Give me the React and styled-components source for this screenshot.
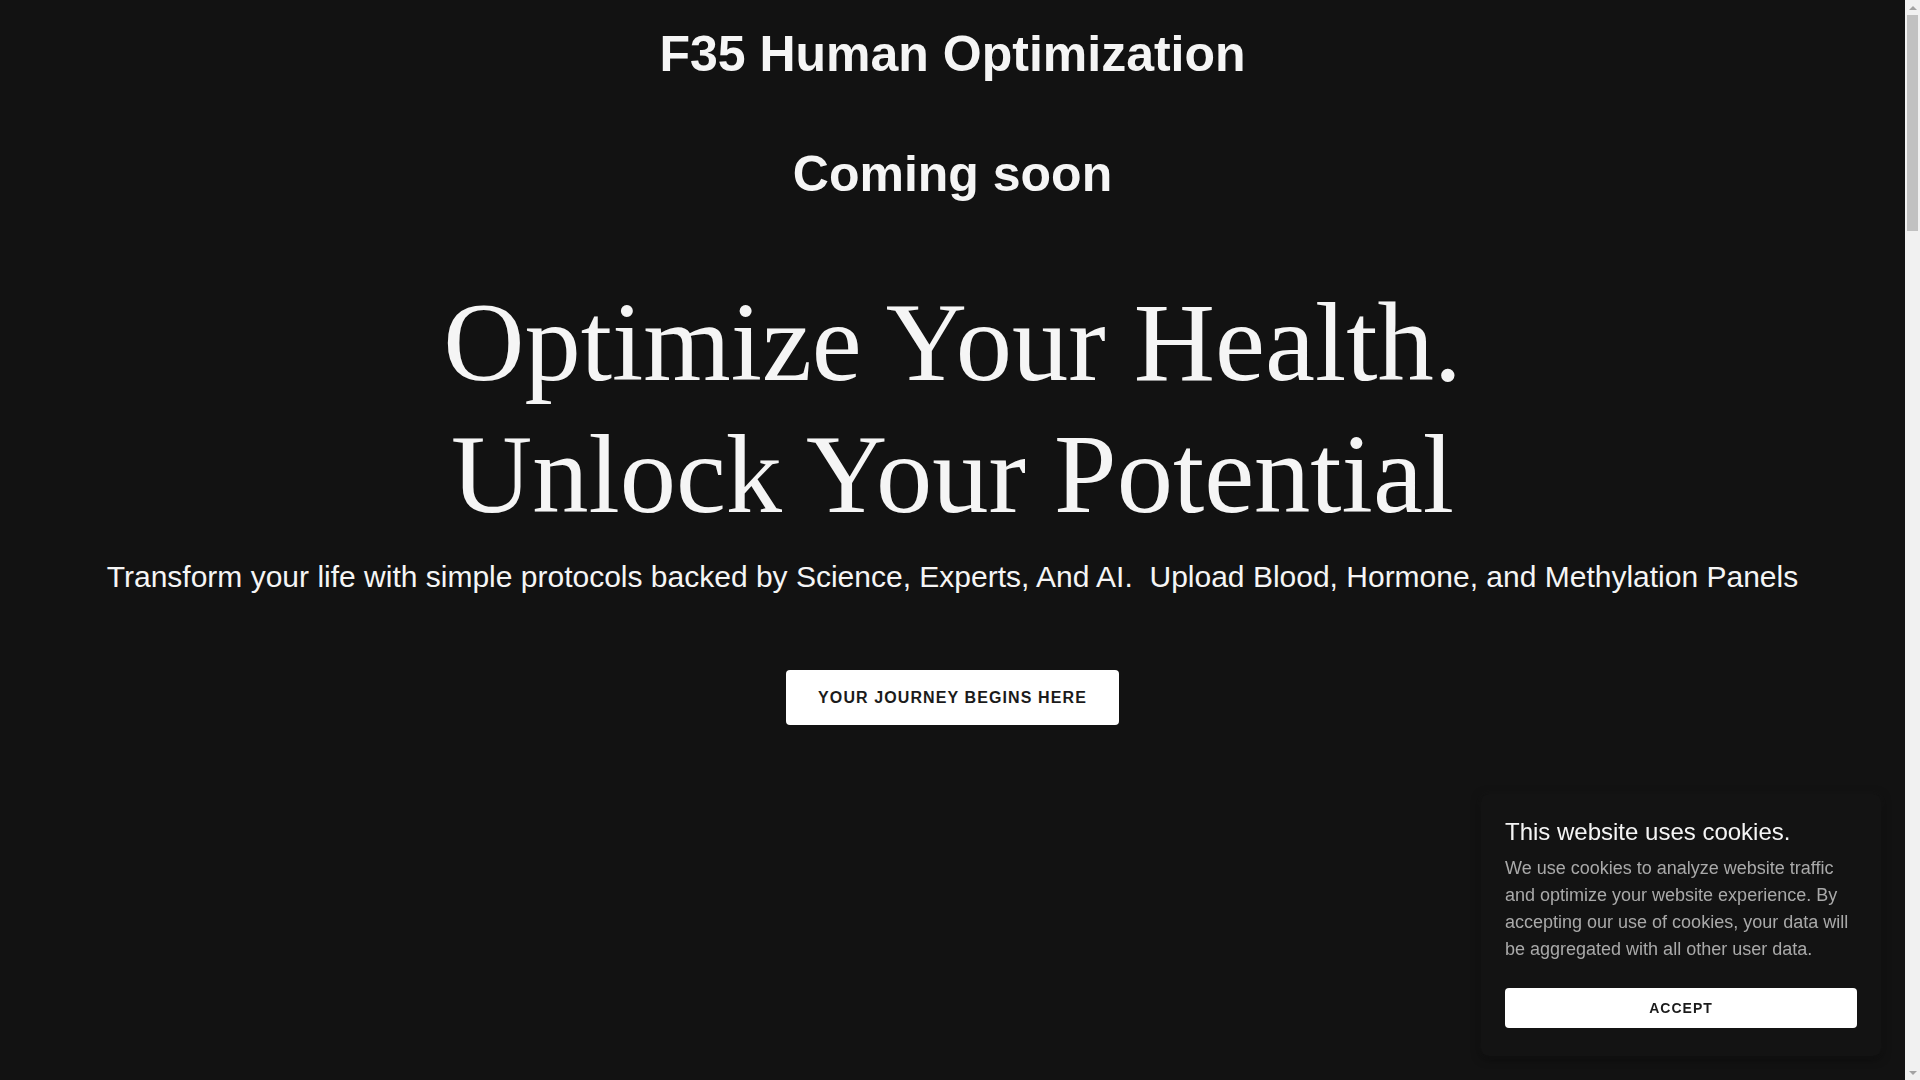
import React from "react";
import styled, { createGlobalStyle } from "styled-components";

const GlobalStyle = createGlobalStyle`
  html, body {
    margin: 0;
    padding: 0;
    background: #121212;
  }
  body {
    font-family: "Liberation Sans", Arial, sans-serif;
    color: #f5f5f5;
  }
  * { box-sizing: border-box; }
`;

const Page = styled.div`
  min-height: 5250px;
  margin-right: 15px;
  background: #121212;
  display: flex;
  flex-direction: column;
`;

const Header = styled.header`
  padding-top: 24px;
  display: flex;
  flex-direction: column;
  align-items: center;
`;

const SiteTitle = styled.h1`
  margin: 0;
  font-family: "Liberation Sans", Arial, sans-serif;
  font-weight: 700;
  font-size: 50px;
  line-height: 60px;
  color: #f5f5f5;
  text-align: center;
`;

const ComingSoon = styled.h2`
  margin: 60px 0 0;
  font-family: "Liberation Sans", Arial, sans-serif;
  font-weight: 700;
  font-size: 50px;
  line-height: 60px;
  color: #f5f5f5;
  text-align: center;
`;

const Hero = styled.section`
  display: flex;
  flex-direction: column;
  align-items: center;
  padding-top: 72px;
`;

const Headline = styled.h3`
  margin: 0;
  font-family: "Liberation Serif", "Times New Roman", serif;
  font-weight: 400;
  font-size: 112.5px;
  line-height: 132px;
  color: #f5f5f5;
  text-align: center;
`;

const HeadlineLine = styled.span`
  display: block;
`;

const Subtitle = styled.p`
  margin: 14px 0 0;
  font-family: "Liberation Sans", Arial, sans-serif;
  font-size: 30px;
  line-height: 45px;
  color: #f5f5f5;
  text-align: center;
  white-space: nowrap;
`;

const CtaButton = styled.a`
  margin-top: 71px;
  display: inline-flex;
  align-items: center;
  justify-content: center;
  height: 55px;
  padding: 0 32px;
  background: #ffffff;
  border-radius: 4px;
  font-family: "Liberation Sans", Arial, sans-serif;
  font-weight: 700;
  font-size: 16px;
  letter-spacing: 1.1px;
  color: #1b1b1b;
  text-decoration: none;
  cursor: pointer;
`;

const CookiePanel = styled.aside`
  position: fixed;
  right: 39px;
  bottom: 24px;
  width: 400px;
  padding: 24px 24px 28px;
  background: #131313;
  border-radius: 8px;
  box-shadow: 0 0 6px rgba(255, 255, 255, 0.04), 0 2px 10px rgba(0, 0, 0, 0.6);
  display: flex;
  flex-direction: column;
`;

const CookieTitle = styled.h4`
  margin: 0;
  font-family: "Liberation Sans", Arial, sans-serif;
  font-weight: 400;
  font-size: 24px;
  line-height: 28.8px;
  color: #f5f5f5;
`;

const CookieText = styled.p`
  margin: 8px 0 0;
  font-family: "Liberation Sans", Arial, sans-serif;
  font-size: 18px;
  line-height: 27px;
  color: #a9a9a9;
`;

const AcceptButton = styled.button`
  margin-top: 25px;
  height: 40px;
  width: 100%;
  border: none;
  border-radius: 4px;
  background: #ffffff;
  font-family: "Liberation Sans", Arial, sans-serif;
  font-weight: 700;
  font-size: 14px;
  letter-spacing: 1px;
  color: #1b1b1b;
  cursor: pointer;
`;

/* Browser scrollbar drawn as an overlay on the right edge */
const ScrollTrack = styled.div`
  position: fixed;
  top: 0;
  right: 0;
  width: 15px;
  height: 100vh;
  background: #f1f1f1;
  display: flex;
  flex-direction: column;
  align-items: center;
`;

const ScrollArrow = styled.div`
  flex: 0 0 15px;
  width: 15px;
  display: flex;
  align-items: center;
  justify-content: center;
  &::before {
    content: "";
    width: 0;
    height: 0;
    border-left: 4px solid transparent;
    border-right: 4px solid transparent;
    ${(p) =>
      p.$down
        ? "border-top: 4px solid #a3a3a3;"
        : "border-bottom: 4px solid #a3a3a3;"}
  }
`;

const ScrollBody = styled.div`
  flex: 1;
  width: 100%;
  padding: 0 2px;
`;

const ScrollThumb = styled.div`
  height: 216px;
  width: 100%;
  background: #c1c1c1;
`;

export default function App() {
  return (
    <>
      <GlobalStyle />
      <Page>
        <Header>
          <SiteTitle>F35 Human Optimization</SiteTitle>
          <ComingSoon>Coming soon</ComingSoon>
        </Header>
        <Hero>
          <Headline>
            <HeadlineLine>Optimize Your Health.</HeadlineLine>
            <HeadlineLine>Unlock Your Potential</HeadlineLine>
          </Headline>
          <Subtitle>
            Transform your life with simple protocols backed by Science, Experts, And AI.{"\u00a0"} Upload Blood, Hormone, and Methylation Panels
          </Subtitle>
          <CtaButton>YOUR JOURNEY BEGINS HERE</CtaButton>
        </Hero>
      </Page>
      <CookiePanel>
        <CookieTitle>This website uses cookies.</CookieTitle>
        <CookieText>
          We use cookies to analyze website traffic and optimize your website experience. By accepting our use of cookies, your data will be aggregated with all other user data.
        </CookieText>
        <AcceptButton>ACCEPT</AcceptButton>
      </CookiePanel>
      <ScrollTrack aria-hidden="true">
        <ScrollArrow />
        <ScrollBody>
          <ScrollThumb />
        </ScrollBody>
        <ScrollArrow $down />
      </ScrollTrack>
    </>
  );
}
